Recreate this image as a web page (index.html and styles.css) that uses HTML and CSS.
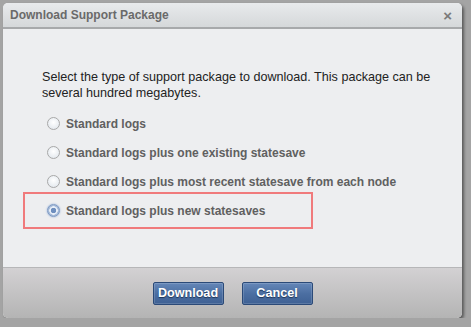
FILE: index.html
```html
<!DOCTYPE html>
<html>
<head>
<meta charset="utf-8">
<link rel="stylesheet" href="styles.css">
</head>
<body>
<div class="dialog">
  <div class="titlebar">
    <span class="title">Download Support Package</span>
    <span class="close">×</span>
  </div>
  <div class="content">
    <p class="intro">Select the type of support package to download. This package can be several hundred megabytes.</p>
    <div class="options">
      <label class="option"><span class="radio"></span>Standard logs</label>
      <label class="option"><span class="radio"></span>Standard logs plus one existing statesave</label>
      <label class="option"><span class="radio"></span>Standard logs plus most recent statesave from each node</label>
      <label class="option selected"><span class="radio checked"></span>Standard logs plus new statesaves</label>
    </div>
  </div>
  <div class="footer">
    <button class="btn">Download</button>
    <button class="btn">Cancel</button>
  </div>
</div>
</body>
</html>
```
FILE: styles.css
```css
html, body {
  margin: 0;
  padding: 0;
  background: #a4a4a4;
  font-family: "Liberation Sans", Arial, sans-serif;
}
.dialog {
  margin: 3px 0 0 3px;
  width: 459px;
  height: 315px;
  border-radius: 5px;
  overflow: hidden;
  display: flex;
  flex-direction: column;
  box-shadow: 2px 2px 3px rgba(0,0,0,0.45);
  background: #edeef0;
}
.titlebar {
  height: 24px;
  flex: none;
  display: flex;
  align-items: center;
  justify-content: space-between;
  padding: 0 10px 0 7px;
  background: linear-gradient(#e8eaec, #d5d8da);
  border-bottom: 2px solid #a7a9ab;
}
.title {
  font-size: 12px;
  font-weight: bold;
  color: #6a6a6a;
}
.close {
  font-size: 15px;
  font-weight: bold;
  color: #7a7a7a;
  line-height: 1;
}
.content {
  flex: 1;
  background: #edeef0;
}
.intro {
  margin: 40px 0 0 39px;
  width: 390px;
  font-size: 12.6px;
  line-height: 16px;
  color: #222;
}
.options {
  margin-top: 8px;
  display: flex;
  flex-direction: column;
}
.option {
  display: flex;
  align-items: center;
  height: 29px;
  padding-left: 44px;
  font-size: 12px;
  font-weight: bold;
  color: #606060;
}
.option.selected {
  position: relative;
}
.option.selected::after {
  content: "";
  position: absolute;
  left: 20px;
  top: -4px;
  width: 286px;
  height: 33px;
  border: 2px solid #f07a7c;
}
.radio {
  width: 11px;
  height: 11px;
  border-radius: 50%;
  border: 1px solid #a8a8a8;
  background: radial-gradient(circle at 50% 40%, #ffffff, #dde3ea);
  margin-right: 6px;
  flex: none;
}
.radio.checked {
  border-color: #7d9ac4;
  background: radial-gradient(circle, #6f8fbf 0 2.5px, #e7eef8 3px 4px, #a8bcd9 4.5px);
  box-shadow: 0 0 2px #8aa6d6;
}
.footer {
  height: 50px;
  flex: none;
  border-top: 1px solid #b6b6b8;
  background: linear-gradient(#d3d1d3, #b4b4b4);
  display: flex;
  align-items: center;
  justify-content: center;
  gap: 18px;
}
.btn {
  width: 71px;
  height: 23px;
  padding: 0;
  border: 1px solid #2b4a78;
  border-radius: 2px;
  background: linear-gradient(#6587b8, #4c6fa2 50%, #3f6194);
  box-shadow: inset 0 0 0 1px rgba(255,255,255,0.15);
  color: #fff;
  font-family: "Liberation Sans", Arial, sans-serif;
  font-size: 12.6px;
  font-weight: bold;
  text-shadow: 0 1px 1px #1e3355;
}
```
